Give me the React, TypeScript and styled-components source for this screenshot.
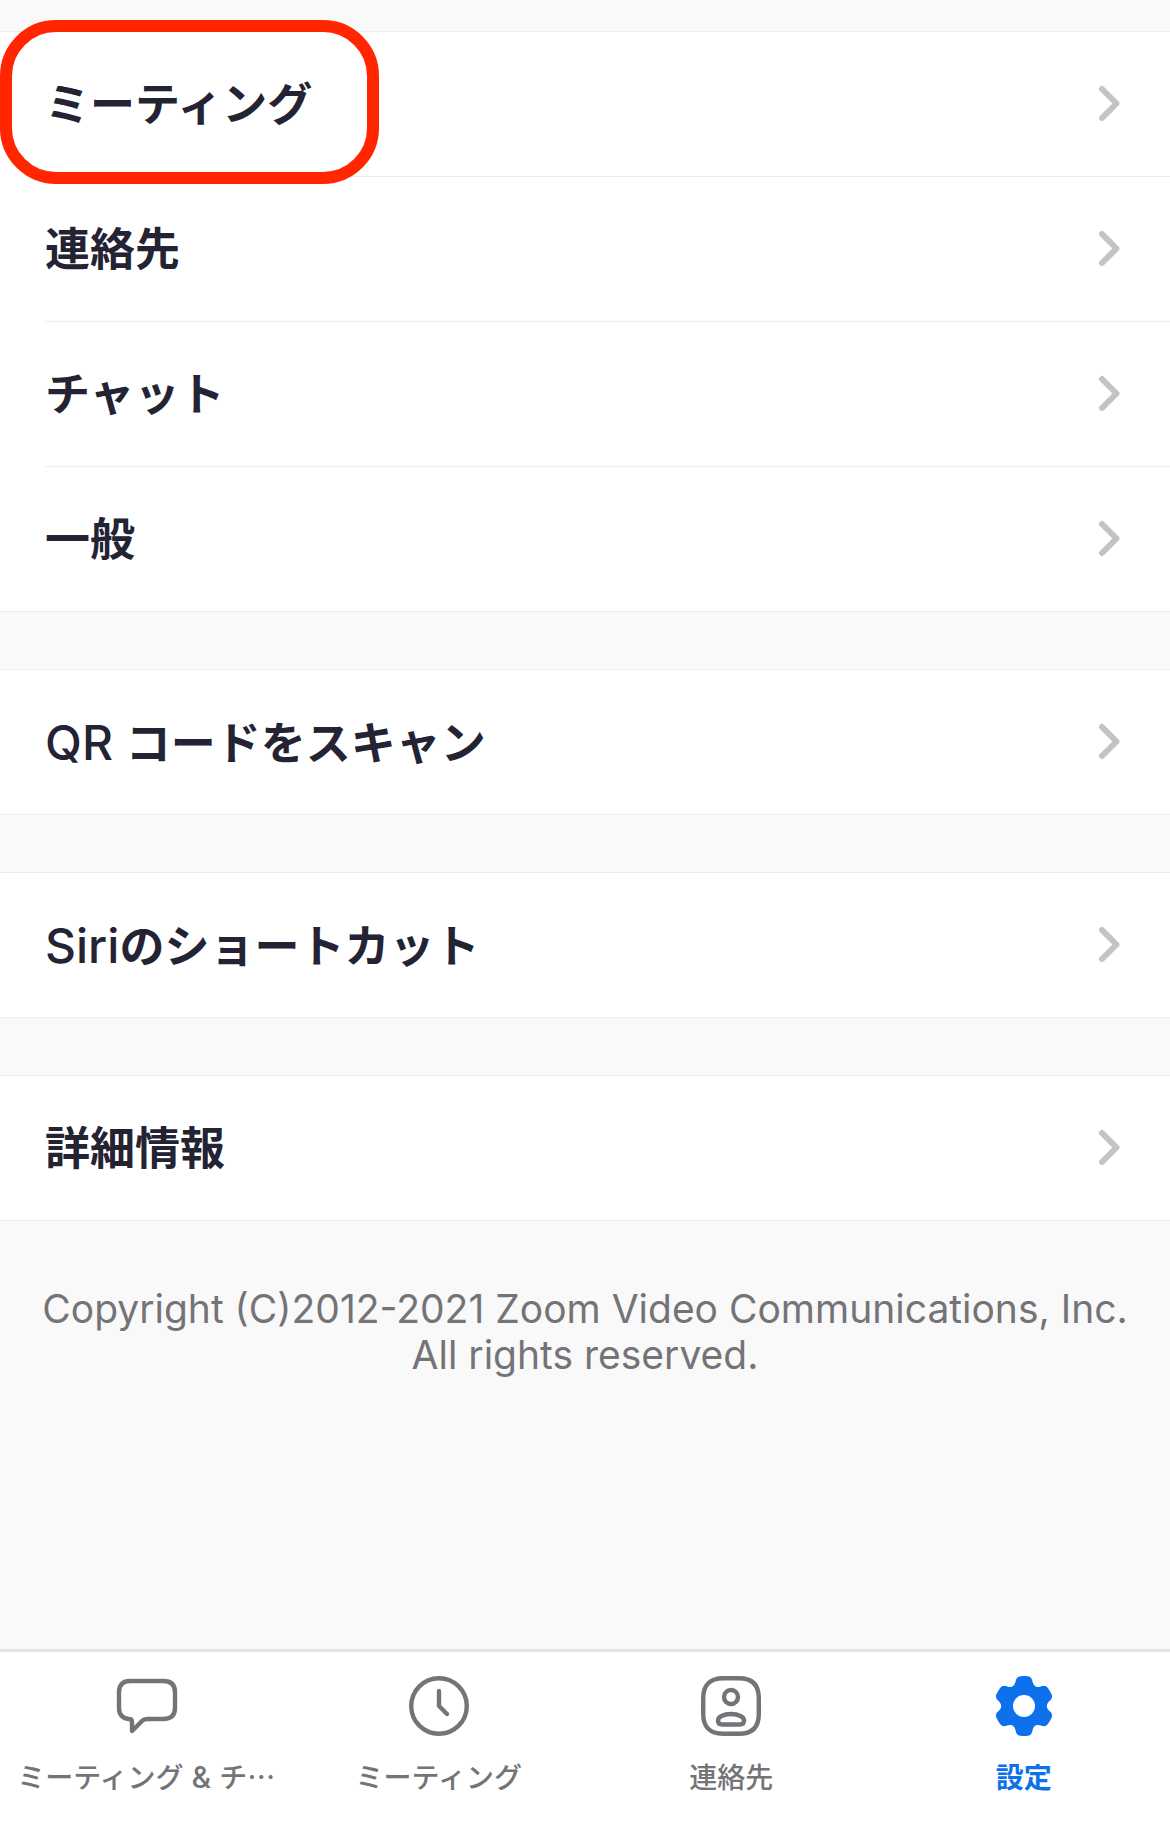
import React from "react";
import styled, { createGlobalStyle, css } from "styled-components";

const GlobalStyle = createGlobalStyle`
  *, *::before, *::after { box-sizing: border-box; }
  body {
    margin: 0;
    background: #f9f9f9;
    font-family: Inter, "Noto Sans CJK JP", sans-serif;
    color: #232333;
  }
`;

const Screen = styled.div`
  min-height: 100vh;
  display: flex;
  flex-direction: column;
`;

const Content = styled.main`
  flex: 1;
  display: flex;
  flex-direction: column;
  gap: 57px;
  padding-top: 31px;
`;

const Group = styled.ul`
  list-style: none;
  margin: 0;
  padding: 0;
  background: #fff;
  border-top: 1px solid #ededee;
  border-bottom: 1px solid #ededee;
`;

const Item = styled.li<{ $marked?: boolean }>`
  position: relative;

  &:not(:first-child)::before {
    content: "";
    display: block;
    height: 1px;
    margin-left: 45px;
    background: #ededee;
  }

  ${(p) =>
    p.$marked &&
    css`
      &::after {
        content: "";
        position: absolute;
        z-index: 1;
        top: -12px;
        left: 0;
        width: 379px;
        height: 164px;
        border: 12px solid #ff2600;
        border-radius: 56px;
        pointer-events: none;
      }
    `}
`;

const RowLink = styled.a`
  display: flex;
  align-items: center;
  justify-content: space-between;
  height: 144px;
  padding: 0 49px 0 45px;
  color: inherit;
  font-size: 45px;
  font-weight: 700;
  line-height: 56px;
  text-decoration: none;
`;

const RowLabel = styled.span`
  padding-top: 2px;
`;

const Latin = styled.span`
  font-size: 48px;
  font-weight: 500;
`;

const Copyright = styled.p`
  margin: 8px 0 0;
  padding: 0 40px;
  color: #747478;
  font-size: 39px;
  line-height: 46px;
  text-align: center;
`;

const TabBar = styled.nav`
  display: grid;
  grid-template-columns: repeat(4, minmax(0, 1fr));
  height: 192px;
  background: #fff;
  border-top: 3px solid #e4e4eb;
`;

const Tab = styled.a<{ $active?: boolean }>`
  display: flex;
  flex-direction: column;
  align-items: center;
  gap: 20px;
  padding-top: 22px;
  color: ${(p) => (p.$active ? "#0e71eb" : "#747478")};
  font-family: "Noto Sans CJK JP", sans-serif;
  font-size: 28px;
  font-weight: ${(p) => (p.$active ? 700 : 500)};
  line-height: 36px;
  white-space: nowrap;
  text-decoration: none;
`;

const Ampersand = styled.span`
  font-family: Inter, sans-serif;
  font-size: 30px;
  line-height: 1;
  white-space: pre;
`;

const Chevron = () => (
  <svg width="24" height="38" viewBox="0 0 24 38" fill="none" stroke="#c3c3c5" strokeWidth="6" strokeLinecap="round" strokeLinejoin="round" aria-hidden="true">
    <path d="M5 4 19.500 18.500 5 33" />
  </svg>
);

const iconProps = {
  width: 64,
  height: 64,
  viewBox: "0 0 64 64",
  fill: "none",
  stroke: "currentColor",
  strokeWidth: 4.4,
  strokeLinecap: "round" as const,
  strokeLinejoin: "round" as const,
  "aria-hidden": true,
};

const ChatIcon = () => (
  <svg {...iconProps}>
    <path d="M16 7H49Q61 7 61 18V34Q61 45 49 45H34Q30 45 28 47L18 57V48Q18 45 15 45Q5 44 5 34V18Q5 7 16 7Z" />
  </svg>
);

const ClockIcon = () => (
  <svg {...iconProps}>
    <circle cx="32" cy="32" r="27.800" />
    <path d="M32 17V32L40 40" />
  </svg>
);

const ContactIcon = () => (
  <svg {...iconProps}>
    <path d="M24 4.200H40C53 4.200 59.800 11 59.800 24V40C59.800 53 53 59.800 40 59.800H24C11 59.800 4.200 53 4.200 40V24C4.200 11 11 4.200 24 4.200Z" />
    <circle cx="32" cy="23" r="7" />
    <path d="M19 46.500C19 43 24 40 32 40S45 43 45 46.500C45 49 43.500 50.500 41 50.500H23C20.500 50.500 19 49 19 46.500Z" />
  </svg>
);

const TOOTH =
  "M19 14Q22.500 11.500 23.300 8.500Q24 2.700 28 2.300Q32 1.900 36 2.300Q40 2.700 40.700 8.500Q41.500 11.500 45 14L32 32Z";

const GearIcon = () => (
  <svg {...iconProps} stroke="none" fill="currentColor">
    {[0, 60, 120, 180, 240, 300].map((angle) => (
      <path key={angle} d={TOOTH} transform={`rotate(${angle} 32 32)`} />
    ))}
    <circle cx="32" cy="32" r="22" />
    <circle cx="32" cy="32" r="11" fill="#fff" />
  </svg>
);

type Entry = { latin?: string; label: string; marked?: boolean };

const groups: Entry[][] = [
  [{ label: "ミーティング", marked: true }, { label: "連絡先" }, { label: "チャット" }, { label: "一般" }],
  [{ latin: "QR ", label: "コードをスキャン" }],
  [{ latin: "Siri", label: "のショートカット" }],
  [{ label: "詳細情報" }],
];

export default function App() {
  return (
    <Screen lang="ja">
      <GlobalStyle />
      <Content>
        {groups.map((entries) => (
          <Group key={entries[0].label}>
            {entries.map((entry) => (
              <Item key={entry.label} $marked={entry.marked}>
                <RowLink href="#">
                  <RowLabel>
                    {entry.latin && <Latin>{entry.latin}</Latin>}
                    {entry.label}
                  </RowLabel>
                  <Chevron />
                </RowLink>
              </Item>
            ))}
          </Group>
        ))}
        <Copyright>
          Copyright (C)2012-2021 Zoom Video Communications, Inc.
          <br />
          All rights reserved.
        </Copyright>
      </Content>
      <TabBar>
        <Tab href="#">
          <ChatIcon />
          <span>
            ミーティング<Ampersand> &amp; </Ampersand>チ…
          </span>
        </Tab>
        <Tab href="#">
          <ClockIcon />
          <span>ミーティング</span>
        </Tab>
        <Tab href="#">
          <ContactIcon />
          <span>連絡先</span>
        </Tab>
        <Tab href="#" $active aria-current="page">
          <GearIcon />
          <span>設定</span>
        </Tab>
      </TabBar>
    </Screen>
  );
}
